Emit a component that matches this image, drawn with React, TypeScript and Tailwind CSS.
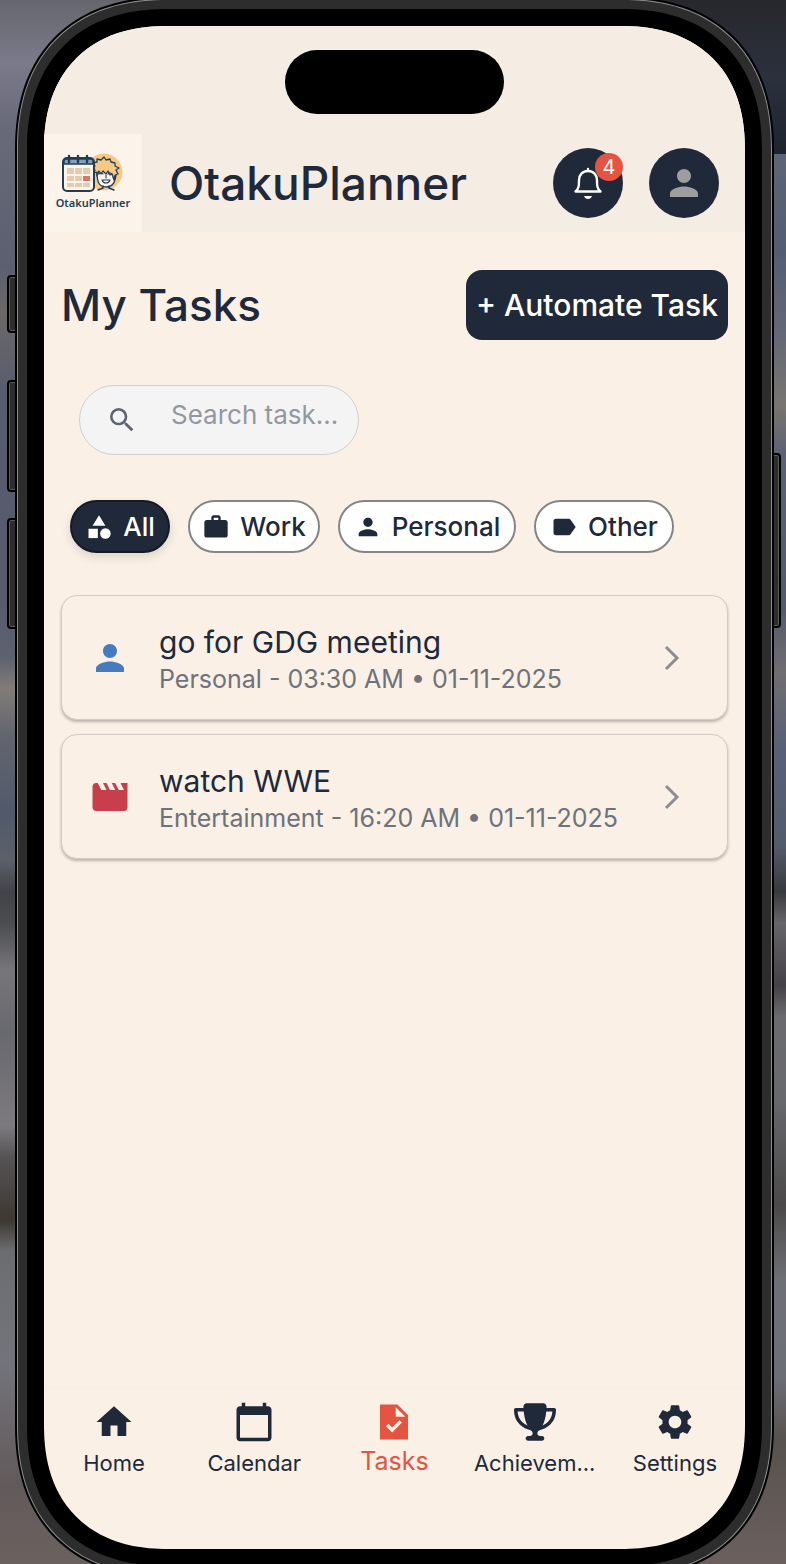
import React, { useState } from "react"
import {
    MdSearch,
    MdCategory,
    MdWork,
    MdPerson,
    MdLabel,
    MdMovie,
    MdHome,
    MdCalendarToday,
    MdSettings,
} from "react-icons/md"
import { FaTrophy } from "react-icons/fa6"

function TaskIcon({ size = 24 }: { size?: number }) {
    return (
        <svg width={size} height={size} viewBox="0 0 24 24" fill="currentColor">
            <path d="M14 2H4v20h16V8l-6-6zm-3.060 16L7.400 14.460l1.410-1.410 2.120 2.120 4.240-4.240 1.410 1.410L10.940 18zM13 9V3.500L18.500 9H13z" />
        </svg>
    )
}

const filters = [
    { name: "All", icon: MdCategory, width: "w-[100px]" },
    { name: "Work", icon: MdWork, width: "w-[132px]" },
    { name: "Personal", icon: MdPerson, width: "w-[178px]" },
    { name: "Other", icon: MdLabel, width: "w-[140px]" },
]

const tasks = [
    { title: "go for GDG meeting", category: "Personal", time: "03:30 AM", date: "01-11-2025", icon: MdPerson, color: "text-[#467bc0]" },
    { title: "watch WWE", category: "Entertainment", time: "16:20 AM", date: "01-11-2025", icon: MdMovie, color: "text-[#c73f4a]" },
]

const tabs = [
    { name: "Home", icon: MdHome },
    { name: "Calendar", icon: MdCalendarToday },
    { name: "Tasks", icon: TaskIcon },
    { name: "Achievements", label: "Achievem...", icon: FaTrophy },
    { name: "Settings", icon: MdSettings },
]

const sideButtons = [
    "top-[275px] left-[7px] h-[58px]",
    "top-[380px] left-[7px] h-[112px]",
    "top-[518px] left-[7px] h-[111px]",
    "top-[453px] right-[5px] h-[175px]",
]

function Logo() {
    return (
        <div className="flex h-[98px] w-[98px] shrink-0 flex-col items-center bg-[#fcf3ea] pt-[18px]">
            <svg width="64" height="42" viewBox="0 0 64 42" fill="none" stroke="#233e52" strokeLinejoin="round" strokeLinecap="round">
                <circle cx="43" cy="20" r="18.5" fill="#f6ca85" stroke="none" />
                <path d="M36 20c0 10 2 15 9 15s10-6 10-15l-5-5-10 1z" fill="#fcf3ea" strokeWidth="1.3" />
                <path d="M36 20l-3 1 1-3-3-2 3-2-2-3 4-1 0-3 4 1 3-3 2 3 4-1 1 3 4 1 0 3 4 2-3 2 2 4-3 1-1 5-2-6-2 1-2-4-2 3-3-3-2 3-2-3-2 5z" fill="#f6ca85" strokeWidth="1.3" />
                <path d="M38 22q2-2 4 0M47 22q2-2 4 0M41 28h8q-1 3-4 3t-4-3M45 23v3" strokeWidth="1.1" />
                <path d="M37 38l5-2v-2M53 38l-5-2v-2" strokeWidth="1.5" />
                <rect x="2" y="6" width="31" height="33" rx="4" fill="#fcf3ea" strokeWidth="2" />
                <path d="M3 12V9q0-2 3-2h23q3 0 3 2v3z" fill="#7fa0be" strokeWidth="1.5" />
                <path d="M8 4v6M17 4v6M26 4v6" strokeWidth="2.4" />
                <g stroke="none" fill="#e2ccad">
                    <rect x="6" y="16" width="7" height="6" />
                    <rect x="14" y="16" width="7" height="6" />
                    <rect x="22" y="16" width="7" height="6" />
                    <rect x="6" y="24" width="7" height="5" />
                    <rect x="14" y="24" width="7" height="5" />
                    <rect x="22" y="24" width="7" height="5" fill="#df7567" />
                    <rect x="6" y="31" width="7" height="4" />
                    <rect x="14" y="31" width="7" height="4" />
                    <rect x="22" y="31" width="7" height="4" />
                </g>
            </svg>
            <span className="font-['Noto_Sans',sans-serif] text-[11px] leading-[18px] font-semibold text-[#233e52]">OtakuPlanner</span>
        </div>
    )
}

function BellIcon() {
    return (
        <svg width="36" height="36" viewBox="0 0 36 36" fill="none" stroke="white" strokeWidth="2.4" strokeLinejoin="round" strokeLinecap="round">
            <path d="M18 4v2M5.500 26.500h25c-3.500-3-3.500-6-3.500-11.500 0-5-3.500-9-9-9s-9 4-9 9c0 5.500 0 8.500-3.500 11.500z" />
            <path d="M14 31h8q-1 3-4 3t-4-3z" fill="white" stroke="none" />
        </svg>
    )
}

export default function App() {
    const [filter, setFilter] = useState("All")
    const [search, setSearch] = useState("")
    const [tab, setTab] = useState("Tasks")

    return (
        <div className="relative flex min-h-screen overflow-hidden pr-3 pl-[15px] font-[Inter,sans-serif] text-[#20293a]">
            {/* wallpaper */}
            <div className="absolute inset-0 grid grid-cols-2">
                <div className="bg-[linear-gradient(180deg,#65666d_0%,#7b7a8a_4%,#686a78_8%,#5b5f70_17%,#6c6866_20%,#575c6f_25%,#575a6b_38%,#5d6170_42%,#827c78_44%,#62656e_47%,#51596a_52%,#5b6069_55%,#414347_57%,#4b4c50_59%,#77767a_62%,#68686f_66%,#7c7a7e_72%,#555354_74%,#3d3830_78%,#6c6d71_80%,#73747b_87%,#62595a_95%,#6b625f_100%)]" />
                <div className="bg-[linear-gradient(180deg,#27282c_0%,#2b303d_5%,#1f2330_154px,#5d6576_154px,#535d72_16%,#626777_21%,#787570_26%,#5c6173_29%,#555a6b_39%,#706d70_43%,#576078_48%,#535c6c_54%,#38393d_57%,#66656a_59%,#444148_63%,#6b6b6f_65%,#68696e_70%,#4b4949_77%,#6f7077_82%,#6c6e76_88%,#57524e_92%,#6b605d_100%)]" />
            </div>

            {sideButtons.map(position => (
                <span key={position} className={`absolute w-3 rounded-sm border-2 border-black bg-[#2d2d2d] shadow-[inset_0_0_0_1px_#5c5c5a] ${position}`} />
            ))}

            <div className="relative -mt-[3px] -mb-[14px] flex flex-1 rounded-[153px] bg-black p-[2px] [corner-shape:superellipse(1.2)]">
                <div className="flex flex-1 rounded-[151px] bg-[#8c8c8c] p-px [corner-shape:superellipse(1.2)]">
                    <div className="flex flex-1 rounded-[150px] bg-[#2d2d2d] p-[9px] [corner-shape:superellipse(1.2)]">
                        <div className="flex flex-1 rounded-[141px] bg-black p-[17px] [corner-shape:superellipse(1.2)]">
                            <div className="relative flex flex-1 flex-col overflow-hidden rounded-[124px] bg-[#faf0e6] [corner-shape:superellipse(1.2)]">
                                <div className="absolute inset-x-0 top-6 mx-auto h-16 w-[219px] rounded-full bg-black" />

                                <header className="flex items-center bg-[#f5ede3] pt-[108px] pr-[26px]">
                                    <Logo />
                                    <h1 className="ml-[27px] flex-1 text-[46px] leading-[56px] font-medium">OtakuPlanner</h1>
                                    <button aria-label="Notifications" className="relative mr-[26px] flex h-[70px] w-[70px] items-center justify-center rounded-full bg-[#20293a]">
                                        <BellIcon />
                                        <span className="absolute top-[5px] right-0 flex h-7 w-7 items-center justify-center rounded-full bg-[#e45440] text-xl text-white">4</span>
                                    </button>
                                    <button aria-label="Profile" className="flex h-[70px] w-[70px] items-center justify-center rounded-full bg-[#20293a] text-[#9e9e9e]">
                                        <MdPerson size={42} />
                                    </button>
                                </header>

                                <main className="flex flex-1 flex-col px-[17px] pt-[38px]">
                                    <div className="flex items-center justify-between">
                                        <h2 className="text-[44px] leading-[56px] font-medium">My Tasks</h2>
                                        <button className="h-[70px] w-[262px] rounded-2xl bg-[#20293a] text-[30px] font-medium whitespace-nowrap text-white">+ Automate Task</button>
                                    </div>

                                    <label className="mt-[45px] ml-[18px] flex h-[70px] w-[280px] items-center rounded-full border border-[#cfcfcf] bg-[#f4f4f4] pr-4 pl-[26px]">
                                        <MdSearch size={32} className="shrink-0 text-[#5d6470]" />
                                        <input
                                            type="text"
                                            aria-label="Search tasks"
                                            placeholder="Search task..."
                                            className="mb-3 ml-[33px] w-full min-w-0 bg-transparent text-[26px] outline-none placeholder:text-[#9497a0]"
                                            value={search}
                                            onChange={e => setSearch(e.target.value)}
                                        />
                                    </label>

                                    <div className="mt-[45px] ml-[9px] flex gap-[18px]">
                                        {filters.map(({ name, icon: Icon, width }) => (
                                            <button
                                                key={name}
                                                onClick={() => setFilter(name)}
                                                className={`flex h-[53px] items-center justify-center gap-2.5 rounded-full border-2 text-[26px] font-medium ${width} ${
                                                    filter === name
                                                    ? "border-[#141a25] bg-[#20293a] text-white shadow-[0_4px_10px_rgba(0,0,0,0.12)]"
                                                    : "border-[#858585] bg-white"
                                                }`}
                                            >
                                                <Icon size={28} className="shrink-0" />
                                                {name}
                                            </button>
                                        ))}
                                    </div>

                                    <ul className="mt-[42px] space-y-[14px]">
                                        {tasks.map(({ title, category, time, date, icon: Icon, color }) => (
                                            <li key={title}>
                                                <button className="flex h-[125px] w-full items-center rounded-2xl border border-[#d5cbc2] bg-[#faf0e6] pr-[38px] pl-[27px] text-left shadow-[0_2px_3px_rgba(0,0,0,0.25)]">
                                                    <Icon size={42} className={`shrink-0 ${color}`} />
                                                    <span className="ml-7 flex-1 pt-1">
                                                        <span className="block text-[30px] leading-[38px]">{title}</span>
                                                        <span className="block text-[25px] leading-9 whitespace-nowrap text-[#6d727b]">{category} - {time} • {date}</span>
                                                    </span>
                                                    <svg width="34" height="34" viewBox="0 0 34 34" fill="none" stroke="#8c8d92" strokeWidth="3">
                                                        <path d="M11 6l11 11-11 11" />
                                                    </svg>
                                                </button>
                                            </li>
                                        ))}
                                    </ul>
                                </main>

                                <nav className="grid h-[161px] grid-cols-5 items-start border-t border-[#f7ede3] pt-3">
                                    {tabs.map(({ name, label, icon: Icon }) => (
                                        <button
                                            key={name}
                                            aria-label={name}
                                            onClick={() => setTab(name)}
                                            className={`flex flex-col items-center ${tab === name ? "text-[25px] leading-9 text-[#e45440]" : "text-[22px] leading-10"}`}
                                        >
                                            <Icon size={42} />
                                            {label || name}
                                        </button>
                                    ))}
                                </nav>
                            </div>
                        </div>
                    </div>
                </div>
            </div>
        </div>
    )
}
